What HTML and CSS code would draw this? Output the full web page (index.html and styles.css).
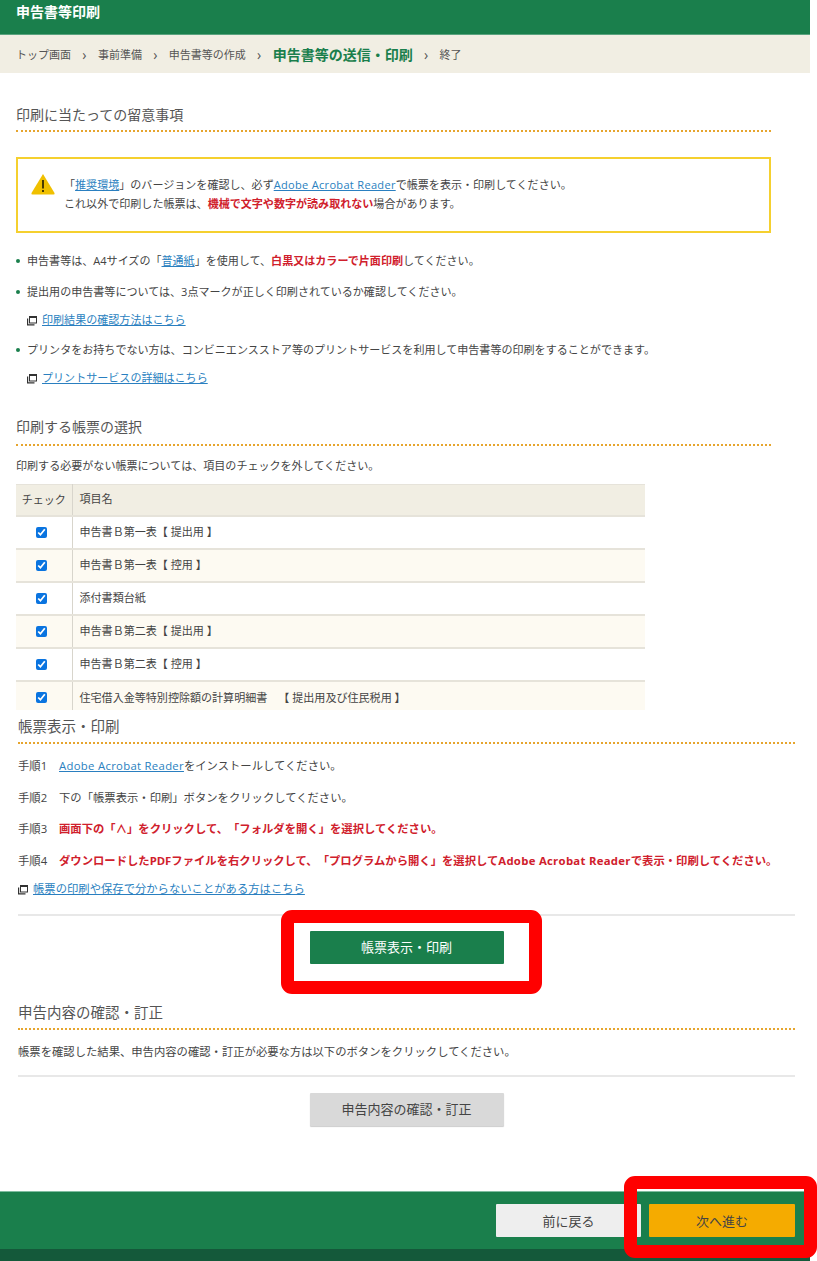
FILE: index.html
```html
<!DOCTYPE html>
<html lang="ja">
<head>
<meta charset="utf-8">
<title>申告書等印刷</title>
<link rel="stylesheet" href="styles.css">
</head>
<body>
<header class="title-bar"><h1>申告書等印刷</h1></header>
<nav class="crumbs">
  <span>トップ画面</span><i>›</i><span>事前準備</span><i>›</i><span>申告書等の作成</span><i>›</i><strong>申告書等の送信・印刷</strong><i>›</i><span>終了</span>
</nav>
<main>
  <section class="upper">
    <h2 class="head first">印刷に当たっての留意事項</h2>
    <div class="notice">
      <svg class="warn" width="24" height="22" viewBox="0 0 24 22"><path d="M12 1 L23.500 20 Q24 21.500 22.500 21.500 L1.500 21.500 Q0 21.500 .5 20 Z" fill="#f0c000"/><rect x="11" y="7" width="2" height="8.500" fill="#4a3b00"/><rect x="11" y="17" width="2" height="2" fill="#4a3b00"/></svg>
      <div>
        <p>「<a href="#">推奨環境</a>」のバージョンを確認し、必ず<a href="#" class="latin">Adobe Acrobat Reader</a>で帳票を表示・印刷してください。</p>
        <p>これ以外で印刷した帳票は、<b>機械で文字や数字が読み取れない</b>場合があります。</p>
      </div>
    </div>
    <ul class="notes">
      <li>申告書等は、A4サイズの「<a href="#">普通紙</a>」を使用して、<b>白黒又はカラーで片面印刷</b>してください。</li>
      <li>提出用の申告書等については、3点マークが正しく印刷されているか確認してください。</li>
      <li class="link"><svg class="win" width="10" height="10" viewBox="0 0 10 10"><path d="M0 2.500H1.200V8.300H7.500V9.500H0Z" fill="#333"/><path fill-rule="evenodd" d="M2 0H10V7.500H2ZM3 2V6.500H9V2Z" fill="#333"/></svg><a href="#">印刷結果の確認方法はこちら</a></li>
      <li>プリンタをお持ちでない方は、コンビニエンスストア等のプリントサービスを利用して申告書等の印刷をすることができます。</li>
      <li class="link"><svg class="win" width="10" height="10" viewBox="0 0 10 10"><path d="M0 2.500H1.200V8.300H7.500V9.500H0Z" fill="#333"/><path fill-rule="evenodd" d="M2 0H10V7.500H2ZM3 2V6.500H9V2Z" fill="#333"/></svg><a href="#">プリントサービスの詳細はこちら</a></li>
    </ul>
    <h2 class="head second">印刷する帳票の選択</h2>
    <p class="intro">印刷する必要がない帳票については、項目のチェックを外してください。</p>
    <div class="table-scroll">
      <table>
        <thead><tr><th class="c">チェック</th><th>項目名</th></tr></thead>
        <tbody>
          <tr><td class="c"><input type="checkbox" checked></td><td>申告書Ｂ第一表【 提出用 】</td></tr>
          <tr><td class="c"><input type="checkbox" checked></td><td>申告書Ｂ第一表【 控用 】</td></tr>
          <tr><td class="c"><input type="checkbox" checked></td><td>添付書類台紙</td></tr>
          <tr><td class="c"><input type="checkbox" checked></td><td>申告書Ｂ第二表【 提出用 】</td></tr>
          <tr><td class="c"><input type="checkbox" checked></td><td>申告書Ｂ第二表【 控用 】</td></tr>
          <tr><td class="c"><input type="checkbox" checked></td><td>住宅借入金等特別控除額の計算明細書　【 提出用及び住民税用 】</td></tr>
        </tbody>
      </table>
    </div>
  </section>
  <section class="lower">
    <h2 class="head third">帳票表示・印刷</h2>
    <ol class="steps">
      <li><span class="n">手順1</span><span><a href="#" class="latin">Adobe Acrobat Reader</a>をインストールしてください。</span></li>
      <li><span class="n">手順2</span><span>下の「帳票表示・印刷」ボタンをクリックしてください。</span></li>
      <li><span class="n">手順3</span><b>画面下の「∧」をクリックして、「フォルダを開く」を選択してください。</b></li>
      <li><span class="n">手順4</span><b>ダウンロードしたPDFファイルを右クリックして、「プログラムから開く」を選択して<span class="latin">Adobe Acrobat Reader</span>で表示・印刷してください。</b></li>
    </ol>
    <p class="help"><svg class="win" width="10" height="10" viewBox="0 0 10 10"><path d="M0 2.500H1.200V8.300H7.500V9.500H0Z" fill="#333"/><path fill-rule="evenodd" d="M2 0H10V7.500H2ZM3 2V6.500H9V2Z" fill="#333"/></svg><a href="#">帳票の印刷や保存で分からないことがある方はこちら</a></p>
    <div class="action">
      <button class="btn green">帳票表示・印刷</button>
      <span class="mark mark-print"></span>
    </div>
    <h2 class="head fourth">申告内容の確認・訂正</h2>
    <p class="intro2">帳票を確認した結果、申告内容の確認・訂正が必要な方は以下のボタンをクリックしてください。</p>
    <div class="action second-action">
      <button class="btn grey">申告内容の確認・訂正</button>
    </div>
  </section>
</main>
<footer>
  <div class="foot-nav">
    <button class="btn light">前に戻る</button>
    <button class="btn amber">次へ進む</button>
  </div>
  <div class="foot-dark"></div>
  <span class="mark mark-next"></span>
</footer>
</body>
</html>
```
FILE: styles.css
```css
* { box-sizing: border-box; }
html, body { margin: 0; padding: 0; }
body {
  width: 817px;
  height: 1261px;
  overflow: hidden;
  background: #fff;
  color: #444;
  font-family: "Open Sans", "Noto Sans CJK JP", sans-serif;
  font-size: 11px;
  line-height: 16px;
  text-spacing-trim: space-all;
  position: relative;
}
h1, h2, p, ul, ol { margin: 0; padding: 0; list-style: none; }
a { color: #2a7fc0; text-decoration: underline; }
b { color: #d0202c; font-weight: 700; }
.latin { letter-spacing: .3px; }

.title-bar {
  width: 810px;
  height: 35px;
  background: #1a7f4c;
  border-bottom: 1px solid #5aa37f;
  padding: 4px 16px 0;
}
h1 { font-size: 14px; line-height: 16px; color: #fff; font-weight: 700; }

.crumbs {
  width: 810px;
  height: 38px;
  background: #f1eee3;
  display: flex;
  align-items: center;
  padding: 2px 0 0 16px;
  color: #555;
}
.crumbs i { font-style: normal; width: 26.900px; text-align: center; font-size: 14px; color: #555; }
.crumbs strong { font-size: 14px; color: #1a7f4c; font-weight: 700; }

.upper { width: 771px; padding-left: 16px; font-size: 11.050px; }
.head {
  font-size: 14px;
  font-weight: 400;
  line-height: 20px;
  color: #555;
  border-bottom: 2px dotted #e6a52e;
}
.first { margin-top: 32px; height: 27px; }
.notice {
  margin-top: 25px;
  height: 76px;
  border: 2px solid #f5d02f;
  display: flex;
  align-items: center;
  padding-left: 13px;
  gap: 9px;
}
.notice .warn { flex: none; align-self: flex-start; margin-top: 14px; }
.notice div { display: flex; flex-direction: column; gap: 3px; margin-top: -2px; }
.notes { margin-top: 20px; display: flex; flex-direction: column; }
.notes li { position: relative; padding-left: 11px; height: 28px; }
.notes li:first-child { height: 31px; }
.notes li::before {
  content: "";
  position: absolute;
  left: 0;
  top: 6px;
  width: 4px;
  height: 4px;
  border-radius: 50%;
  background: #1a7f4c;
}
.notes li.link { padding-left: 11px; height: 30px; display: flex; align-items: flex-start; gap: 5px; }
.notes li.link::before { display: none; }
.win { flex: none; vertical-align: middle; margin-top: 4px; }
.second { margin-top: 17px; height: 29px; }
.intro { margin-top: 12px; }
.table-scroll { margin-top: 10px; height: 226px; overflow: hidden; width: 629px; }
table { width: 629px; border-collapse: collapse; table-layout: fixed; }
th, td { height: 33px; padding: 0 7px; text-align: left; font-weight: 400; border-top: 2px solid #e6e3da; }
th { background: #f1eee3; border-top: 1px solid #e6e3da; height: 31px; padding-bottom: 1px; }
th.c, td.c { width: 56px; padding: 0; text-align: center; border-right: 1px solid #d8d5cc; }
td.c { padding-right: 5px; }
tbody tr:nth-child(even) td { background: #fdfaf2; }
input[type="checkbox"] { display: block; width: 11px; height: 11px; margin: 0 auto; accent-color: #0a74e0; }

.lower { width: 795px; padding-left: 18px; font-size: 11.330px; }
.lower .head { font-size: 14.500px; }
.third { height: 34px; padding-top: 7px; }
.steps { margin-top: 14px; display: flex; flex-direction: column; }
.steps li { display: flex; height: 31.700px; white-space: nowrap; }
.steps .n { width: 41px; flex: none; }
.help { display: flex; gap: 5px; margin-top: -4px; }
.help .win { margin-top: 4px; }
.action { position: relative; display: flex; justify-content: center; margin-top: 17px; border-top: 2px solid #e8e8e8; padding-top: 15px; }
.btn {
  width: 194px;
  height: 33px;
  border: 0;
  border-radius: 1px;
  font-family: inherit;
  font-size: 13px;
  line-height: 16px;
  padding: 0;
}
.green { background: #1a7f4c; color: #fff; }
.grey { background: #d9d9d9; color: #444; box-shadow: 0 1px 1px #ccc; }
.light { width: 145px; background: #eeeeee; color: #444; }
.amber { width: 146px; background: #f5ab00; color: #444; }
.fourth { margin-top: 39px; height: 27px; }
.intro2 { margin-top: 14px; }
.second-action { margin-top: 15px; padding-top: 16px; }

footer { position: absolute; left: 0; top: 1191px; width: 810px; }
.foot-nav {
  height: 58px;
  background: #1a7f4c;
  border-top: 1px solid #7fbca0;
  display: flex;
  justify-content: flex-end;
  align-items: flex-start;
  gap: 8px;
  padding: 12px 15px 0 0;
}
.foot-dark { height: 12px; background: #14593a; }
.mark {
  position: absolute;
  border: 13px solid #f00;
  border-radius: 11px;
  pointer-events: none;
}
.mark-print { left: 263px; top: -6px; width: 261px; height: 84px; }
.mark-next { left: 624px; top: -15px; width: 193px; height: 82px; }
```
